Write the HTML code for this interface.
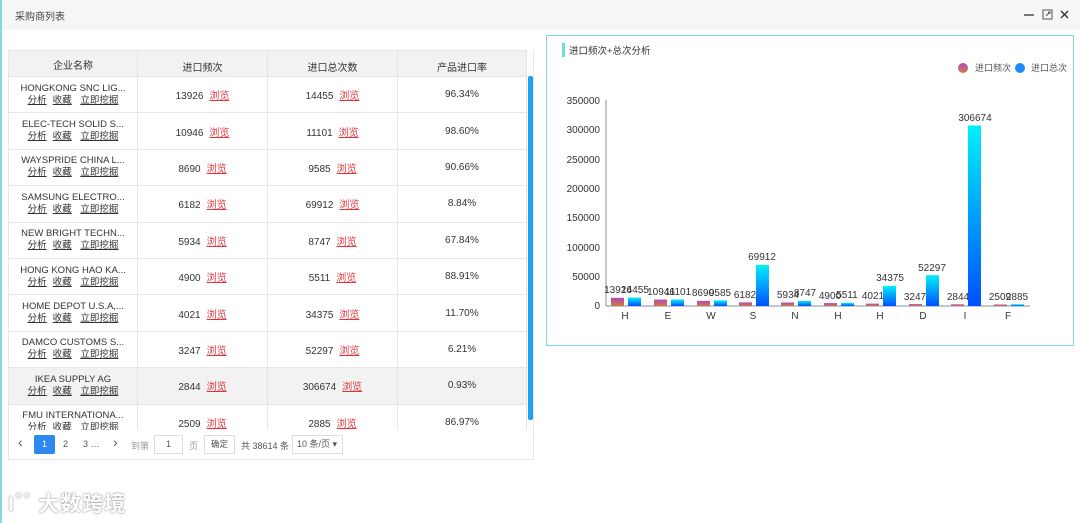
<!DOCTYPE html>
<html><head><meta charset="utf-8"><style>
*{box-sizing:border-box;margin:0;padding:0}
body{width:1080px;height:523px;overflow:hidden;background:#fff;font-family:"Liberation Sans","Noto Sans CJK SC",sans-serif;position:relative;color:#333}
.top{position:absolute;left:0;top:0;width:1080px;height:30px;background:#f6f6f6;border-left:2px solid #7fd8e6}
.top .t{position:absolute;left:13px;top:8px;font-size:10px;color:#444}
.lb{position:absolute;left:0;top:30px;width:2px;height:493px;background:#7fd8e6}
.wrap{position:absolute;left:8px;top:50px;width:526px;height:380px;overflow:hidden;border-right:1px solid #e6e6e6}
table{border-collapse:collapse;width:519px;font-size:10px}
td,th{border:1px solid #e6e6e6;text-align:center;font-weight:normal}
th{background:#f2f2f2;height:26px;color:#333}
td{height:36.4px;color:#333}
td.n{line-height:12px;font-size:9.5px}
td.n u{margin:0 3px}
.r{color:#e0333a;text-decoration:underline;margin-left:6px}
tr.hl td{background:#f2f2f2}
.sb{position:absolute;left:528px;top:76px;width:5px;height:344px;background:#1ea0f5;border-radius:2px}
.pg{position:absolute;left:8px;top:430px;width:526px;height:30px;border:1px solid #e6e6e6;border-top:none;font-size:9px;color:#555}
.pg span{position:absolute;top:9px}
.box{position:absolute;left:546px;top:35px;width:528px;height:311px;border:1px solid #7fd8e6}
</style></head><body>
<div class="top"><span class="t">采购商列表</span>
<svg style="position:absolute;left:1020px;top:8px" width="56" height="14"><line x1="2" y1="7" x2="12" y2="7" stroke="#333" stroke-width="1.3"/><rect x="21" y="2" width="9" height="9" fill="none" stroke="#555"/><path d="M24 8l4-4M26 4h2v2" stroke="#555" fill="none"/><path d="M39 3l7 7M46 3l-7 7" stroke="#333" stroke-width="1.4"/></svg></div>
<div class="lb"></div>
<div class="wrap">
<table>
<tr><th style="width:129px;vertical-align:top;padding-top:6px">企业名称</th><th style="width:130px;padding-top:6px">进口频次</th><th style="width:130px;padding-top:6px">进口总次数</th><th style="padding-top:6px">产品进口率</th></tr>
<tr><td class="n">HONGKONG SNC LIG...<br><u>分析</u><u>收藏</u> <u>立即挖掘</u></td><td>13926<span class="r">浏览</span></td><td>14455<span class="r">浏览</span></td><td>96.34%</td></tr>
<tr><td class="n">ELEC-TECH SOLID S...<br><u>分析</u><u>收藏</u> <u>立即挖掘</u></td><td>10946<span class="r">浏览</span></td><td>11101<span class="r">浏览</span></td><td>98.60%</td></tr>
<tr><td class="n">WAYSPRIDE CHINA L...<br><u>分析</u><u>收藏</u> <u>立即挖掘</u></td><td>8690<span class="r">浏览</span></td><td>9585<span class="r">浏览</span></td><td>90.66%</td></tr>
<tr><td class="n">SAMSUNG ELECTRO...<br><u>分析</u><u>收藏</u> <u>立即挖掘</u></td><td>6182<span class="r">浏览</span></td><td>69912<span class="r">浏览</span></td><td>8.84%</td></tr>
<tr><td class="n">NEW BRIGHT TECHN...<br><u>分析</u><u>收藏</u> <u>立即挖掘</u></td><td>5934<span class="r">浏览</span></td><td>8747<span class="r">浏览</span></td><td>67.84%</td></tr>
<tr><td class="n">HONG KONG HAO KA...<br><u>分析</u><u>收藏</u> <u>立即挖掘</u></td><td>4900<span class="r">浏览</span></td><td>5511<span class="r">浏览</span></td><td>88.91%</td></tr>
<tr><td class="n">HOME DEPOT U.S.A,...<br><u>分析</u><u>收藏</u> <u>立即挖掘</u></td><td>4021<span class="r">浏览</span></td><td>34375<span class="r">浏览</span></td><td>11.70%</td></tr>
<tr><td class="n">DAMCO CUSTOMS S...<br><u>分析</u><u>收藏</u> <u>立即挖掘</u></td><td>3247<span class="r">浏览</span></td><td>52297<span class="r">浏览</span></td><td>6.21%</td></tr>
<tr class="hl"><td class="n">IKEA SUPPLY AG<br><u>分析</u><u>收藏</u> <u>立即挖掘</u></td><td>2844<span class="r">浏览</span></td><td>306674<span class="r">浏览</span></td><td>0.93%</td></tr>
<tr><td class="n">FMU INTERNATIONA...<br><u>分析</u><u>收藏</u> <u>立即挖掘</u></td><td>2509<span class="r">浏览</span></td><td>2885<span class="r">浏览</span></td><td>86.97%</td></tr>
</table>
</div>
<div class="sb"></div>
<div class="pg">
<span style="left:9px;top:4px;font-size:14px">‹</span>
<span style="left:25px;top:5px;width:21px;height:19px;background:#2f88f0;color:#fff;text-align:center;line-height:19px;border-radius:2px">1</span>
<span style="left:54px">2</span><span style="left:74px">3 …</span><span style="left:104px;top:4px;font-size:14px">›</span>
<span style="left:122px;color:#999">到第</span>
<span style="left:145px;top:5px;width:29px;height:19px;border:1px solid #ddd;text-align:center;line-height:17px">1</span>
<span style="left:180px;color:#999">页</span>
<span style="left:195px;top:5px;width:31px;height:19px;border:1px solid #ddd;text-align:center;line-height:17px;font-size:8.5px">确定</span>
<span style="left:232px">共 38614 条</span>
<span style="left:283px;top:5px;width:51px;height:19px;border:1px solid #ddd;line-height:17px;padding-left:4px;white-space:nowrap">10 条/页 ▾</span>
</div>
<div style="position:absolute;left:8px;top:488px;font-size:21px;font-weight:bold;color:#fff;text-shadow:0 0 2px #999,0 0 1px #888;letter-spacing:1px">I<span style="font-size:12px;vertical-align:top">○○</span> 大数跨境</div>
<div class="box"></div>
<svg style="position:absolute;left:0;top:0" width="1080" height="523" font-family="Liberation Sans, Noto Sans CJK SC, sans-serif">
<defs>
<linearGradient id="b" x1="0" y1="0" x2="0" y2="1"><stop offset="0" stop-color="#00f0f8"/><stop offset="1" stop-color="#0050ff"/></linearGradient>
<linearGradient id="p" x1="0" y1="0" x2="0" y2="1"><stop offset="0" stop-color="#b04ab8"/><stop offset="1" stop-color="#d07a40"/></linearGradient>
</defs>
<rect x="562" y="43" width="3" height="14" fill="#6edbe8"/>
<text x="569" y="54" font-size="9.5" fill="#333">进口频次+总次分析</text>
<circle cx="963" cy="68" r="5" fill="url(#p)"/><text x="975" y="71" font-size="9" fill="#555">进口频次</text>
<circle cx="1020" cy="68" r="5" fill="#1a8cff"/><text x="1031" y="71" font-size="9" fill="#555">进口总次</text>
<g font-size="10" fill="#333" text-anchor="end">
<text x="600" y="104">350000</text><text x="600" y="133">300000</text><text x="600" y="163">250000</text><text x="600" y="192">200000</text><text x="600" y="221">150000</text><text x="600" y="251">100000</text><text x="600" y="280">50000</text><text x="600" y="309">0</text>
</g>
<line x1="606" y1="100" x2="606" y2="306" stroke="#8090a8"/>
<line x1="606" y1="306" x2="1030" y2="306" stroke="#8090a8"/>
<g fill="url(#p)">
<rect x="611" y="297.8" width="13" height="8.2"/><rect x="654" y="299.6" width="13" height="6.4"/><rect x="697" y="300.9" width="13" height="5.1"/><rect x="739" y="302.4" width="13" height="3.6"/><rect x="781" y="302.5" width="13" height="3.5"/><rect x="824" y="303.1" width="13" height="2.9"/><rect x="866" y="303.6" width="13" height="2.4"/><rect x="909" y="304.1" width="13" height="1.9"/><rect x="951" y="304.3" width="13" height="1.7"/><rect x="994" y="304.5" width="13" height="1.5"/>
</g>
<g fill="url(#b)">
<rect x="628" y="297.5" width="13" height="8.5"/><rect x="671" y="299.5" width="13" height="6.5"/><rect x="714" y="300.4" width="13" height="5.6"/><rect x="756" y="264.9" width="13" height="41.1"/><rect x="798" y="300.9" width="13" height="5.1"/><rect x="841" y="302.8" width="13" height="3.2"/><rect x="883" y="285.8" width="13" height="20.2"/><rect x="926" y="275.2" width="13" height="30.8"/><rect x="968" y="125.5" width="13" height="180.5"/><rect x="1011" y="304.3" width="13" height="1.7"/>
</g>
<g font-size="10" fill="#333" text-anchor="middle">
<text x="618" y="293">13926</text><text x="635" y="293">14455</text><text x="661" y="295">10946</text><text x="678" y="295">11101</text><text x="703" y="296">8690</text><text x="720" y="296">9585</text><text x="745" y="298">6182</text><text x="762" y="260">69912</text><text x="788" y="298">5934</text><text x="805" y="296">8747</text><text x="830" y="299">4900</text><text x="847" y="298">5511</text><text x="873" y="299">4021</text><text x="890" y="281">34375</text><text x="915" y="300">3247</text><text x="932" y="271">52297</text><text x="958" y="300">2844</text><text x="975" y="121">306674</text><text x="1000" y="300">2509</text><text x="1017" y="300">2885</text>
</g>
<g font-size="10" fill="#333" text-anchor="middle">
<text x="625" y="319">H</text><text x="668" y="319">E</text><text x="711" y="319">W</text><text x="753" y="319">S</text><text x="795" y="319">N</text><text x="838" y="319">H</text><text x="880" y="319">H</text><text x="923" y="319">D</text><text x="965" y="319">I</text><text x="1008" y="319">F</text>
</g>
</svg>
</body></html>
